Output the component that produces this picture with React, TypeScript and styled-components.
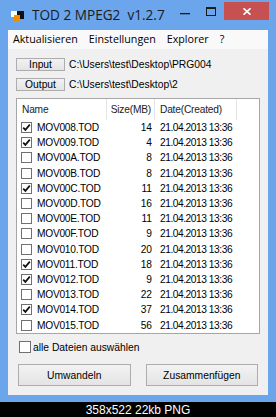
import React from 'react';
import styled, { createGlobalStyle } from 'styled-components';

const GlobalStyle = createGlobalStyle`
  html, body {
    margin: 0;
    padding: 0;
    background: #000;
  }
  * {
    box-sizing: border-box;
  }
`;

const Page = styled.div`
  width: 276px;
  height: 417px;
  display: flex;
  flex-direction: column;
  background: #000;
  overflow: hidden;
`;

const Window = styled.div`
  height: 402px;
  background: #6ba6ed;
  padding: 0 8px 7px 8px;
  display: flex;
  flex-direction: column;
`;

const TitleBar = styled.div`
  height: 30px;
  display: flex;
  align-items: flex-start;
  margin: 0 -8px;
  padding-left: 11px;
`;

const AppIcon = styled.svg`
  margin-top: 11px;
  flex: none;
`;

const Title = styled.div`
  margin-left: 8px;
  margin-top: 5px;
  font-family: 'Open Sans', 'Noto Sans', sans-serif;
  font-size: 13.6px;
  color: #1b1b1b;
  white-space: pre;
  line-height: 20px;
`;

const Controls = styled.div`
  margin-left: auto;
  margin-right: 7px;
  margin-top: 2px;
  display: flex;
`;

const CtrlButton = styled.div`
  width: 26px;
  height: 18px;
  display: flex;
  align-items: center;
  justify-content: center;
`;

const CloseButton = styled.div`
  width: 45px;
  height: 18px;
  background: #c75050;
  display: flex;
  align-items: center;
  justify-content: center;
`;

const Client = styled.div`
  flex: 1;
  background: #f0f0f0;
  display: flex;
  flex-direction: column;
`;

const MenuBar = styled.div`
  height: 19px;
  background: #f9f9f9;
  display: flex;
  align-items: center;
  gap: 11px;
  padding-left: 5px;
  font-family: 'Open Sans', 'Noto Sans', sans-serif;
  font-size: 10.7px;
  color: #000;
`;

const MenuItem = styled.span`
  line-height: 19px;
`;

const Body = styled.div`
  flex: 1;
  padding: 9px 8px 9px 8px;
  display: flex;
  flex-direction: column;
  font-family: 'Liberation Sans', Arial, sans-serif;
  font-size: 10.3px;
  color: #000;
`;

const PathRow = styled.div<{ $gap?: number }>`
  display: flex;
  align-items: center;
  height: 13px;
  margin-bottom: ${(p) => p.$gap ?? 0}px;
`;

const SmallButton = styled.div`
  width: 49px;
  height: 13px;
  border: 1px solid #adadad;
  background: linear-gradient(#f2f2f2, #e4e4e4);
  display: flex;
  align-items: center;
  justify-content: center;
  line-height: 11px;
`;

const PathText = styled.span`
  margin-left: 4px;
`;

const ListBox = styled.div`
  margin-top: 7px;
  height: 236px;
  border: 1px solid #a6a6a6;
  background: #fff;
  display: flex;
  flex-direction: column;
  font-size: 10.2px;
`;

const Columns = `
  display: grid;
  grid-template-columns: 90px 48px 82px 1fr;
`;

const Header = styled.div`
  ${Columns}
  height: 21px;
  flex: none;
  letter-spacing: -0.2px;
`;

const HeaderCell = styled.div<{ $align?: 'left' | 'right' }>`
  display: flex;
  align-items: center;
  justify-content: ${(p) => (p.$align === 'right' ? 'flex-end' : 'flex-start')};
  padding: ${(p) => (p.$align === 'right' ? '0 3px 0 0' : '0 0 0 5px')};
  border-right: 1px solid #e5e5e5;
  color: #222;

  &:last-child {
    border-right: none;
  }
`;

const Row = styled.div`
  ${Columns}
  height: 15.2px;
  flex: none;
  align-items: center;
`;

const NameCell = styled.div`
  display: flex;
  align-items: center;
  padding-left: 4px;
  gap: 5px;
  letter-spacing: -0.25px;
  white-space: nowrap;
`;

const SizeCell = styled.div`
  text-align: right;
  padding-right: 3px;
`;

const DateCell = styled.div`
  padding-left: 5px;
  white-space: nowrap;
  letter-spacing: -0.45px;
`;

const Box = styled.div<{ $size: number }>`
  width: ${(p) => p.$size}px;
  height: ${(p) => p.$size}px;
  border: 1px solid #707070;
  background: #fff;
  flex: none;
  display: flex;
  align-items: center;
  justify-content: center;
`;

const AllRow = styled.div`
  margin-top: 7px;
  height: 12px;
  display: flex;
  align-items: center;
  padding-left: 3px;
  gap: 2px;
`;

const ButtonRow = styled.div`
  margin-top: 11px;
  display: grid;
  grid-template-columns: 1fr 1fr;
  gap: 15px;
  padding: 0 2px;
`;

const BigButton = styled.div`
  height: 22px;
  border: 1px solid #adadad;
  background: linear-gradient(#f2f2f2, #e4e4e4);
  display: flex;
  align-items: center;
  justify-content: center;
`;

const Caption = styled.div`
  flex: 1;
  display: flex;
  align-items: center;
  justify-content: center;
  font-family: 'Liberation Sans', Arial, sans-serif;
  font-size: 12px;
  color: #fff;
`;

const Check: React.FC<{ checked: boolean; size?: number }> = ({ checked, size = 11 }) => (
  <Box $size={size}>
    {checked && (
      <svg width="9" height="9" viewBox="0 0 9 9">
        <path d="M1.2 4.6 L3.4 6.9 L7.8 1.6" fill="none" stroke="#111" strokeWidth="1.7" />
      </svg>
    )}
  </Box>
);

const files: { name: string; size: number; checked: boolean }[] = [
  { name: 'MOV008.TOD', size: 14, checked: true },
  { name: 'MOV009.TOD', size: 4, checked: true },
  { name: 'MOV00A.TOD', size: 8, checked: false },
  { name: 'MOV00B.TOD', size: 8, checked: false },
  { name: 'MOV00C.TOD', size: 11, checked: true },
  { name: 'MOV00D.TOD', size: 16, checked: false },
  { name: 'MOV00E.TOD', size: 11, checked: false },
  { name: 'MOV00F.TOD', size: 9, checked: false },
  { name: 'MOV010.TOD', size: 20, checked: false },
  { name: 'MOV011.TOD', size: 18, checked: true },
  { name: 'MOV012.TOD', size: 9, checked: true },
  { name: 'MOV013.TOD', size: 22, checked: false },
  { name: 'MOV014.TOD', size: 37, checked: true },
  { name: 'MOV015.TOD', size: 56, checked: false },
];

export default function App() {
  return (
    <Page>
      <GlobalStyle />
      <Window>
        <TitleBar>
          <AppIcon width="13" height="10" viewBox="0 0 13 10">
            <rect x="6" y="0" width="7" height="8" fill="#111" />
            <rect x="0" y="0" width="6" height="6" fill="#fff" />
            <rect x="3" y="4" width="6" height="6" fill="#f28c00" />
          </AppIcon>
          <Title>TOD 2 MPEG2  v1.2.7</Title>
          <Controls>
            <CtrlButton>
              <svg width="10" height="10" viewBox="0 0 10 10">
                <rect x="0" y="7" width="10" height="1.3" fill="#1b1b1b" />
              </svg>
            </CtrlButton>
            <CtrlButton>
              <svg width="10" height="9" viewBox="0 0 10 9">
                <rect x="0.5" y="0.5" width="9" height="8" fill="none" stroke="#1b1b1b" />
                <rect x="0" y="0" width="10" height="2" fill="#1b1b1b" />
              </svg>
            </CtrlButton>
            <CloseButton>
              <svg width="8" height="7" viewBox="0 0 8 7">
                <path d="M0.5 0.3 L7.5 6.7 M7.5 0.3 L0.5 6.7" stroke="#fff" strokeWidth="1.6" />
              </svg>
            </CloseButton>
          </Controls>
        </TitleBar>
        <Client>
          <MenuBar>
            <MenuItem>Aktualisieren</MenuItem>
            <MenuItem>Einstellungen</MenuItem>
            <MenuItem>Explorer</MenuItem>
            <MenuItem>?</MenuItem>
          </MenuBar>
          <Body>
            <PathRow $gap={7}>
              <SmallButton>Input</SmallButton>
              <PathText>C:\Users\test\Desktop\PRG004</PathText>
            </PathRow>
            <PathRow>
              <SmallButton>Output</SmallButton>
              <PathText>C:\Users\test\Desktop\2</PathText>
            </PathRow>
            <ListBox>
              <Header>
                <HeaderCell>Name</HeaderCell>
                <HeaderCell $align="right">Size(MB)</HeaderCell>
                <HeaderCell>Date(Created)</HeaderCell>
                <HeaderCell />
              </Header>
              {files.map((f) => (
                <Row key={f.name}>
                  <NameCell>
                    <Check checked={f.checked} />
                    <span>{f.name}</span>
                  </NameCell>
                  <SizeCell>{f.size}</SizeCell>
                  <DateCell>21.04.2013 13:36</DateCell>
                  <div />
                </Row>
              ))}
            </ListBox>
            <AllRow>
              <Check checked={false} size={12} />
              <span>alle Dateien auswählen</span>
            </AllRow>
            <ButtonRow>
              <BigButton>Umwandeln</BigButton>
              <BigButton>Zusammenfügen</BigButton>
            </ButtonRow>
          </Body>
        </Client>
      </Window>
      <Caption>358x522 22kb PNG</Caption>
    </Page>
  );
}
